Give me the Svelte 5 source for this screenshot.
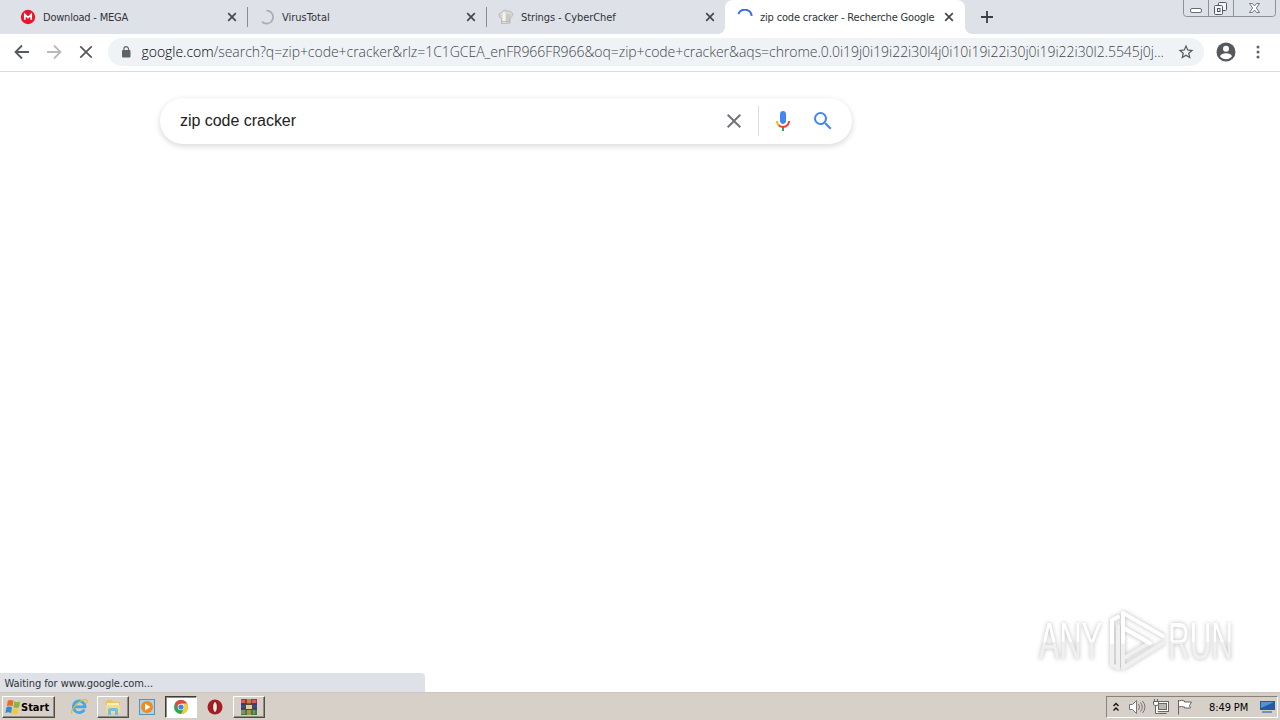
<script lang="ts">
	interface Tab {
		title: string;
		icon: 'mega' | 'loading' | 'chef' | 'spinner';
		active?: boolean;
		spacing: number;
	}

	const tabs: Tab[] = [
		{ title: 'Download - MEGA', icon: 'mega', spacing: -0.22 },
		{ title: 'VirusTotal', icon: 'loading', spacing: 0 },
		{ title: 'Strings - CyberChef', icon: 'chef', spacing: -0.1 },
		{ title: 'zip code cracker - Recherche Google', icon: 'spinner', active: true, spacing: -0.18 }
	];

	const host = 'google.com';
	const path =
		'/search?q=zip+code+cracker&rlz=1C1GCEA_enFR966FR966&oq=zip+code+cracker&aqs=chrome.0.0i19j0i19i22i30l4j0i10i19i22i30j0i19i22i30l2.5545j0j...';

	let query = $state('zip code cracker');
</script>

<div class="screen">
	<header class="tab-strip">
		{#each tabs as tab}
			<div class="tab" class:active={tab.active}>
				<svg class="favicon" viewBox="0 0 16 16">
					{#if tab.icon === 'mega'}
						<circle cx="8" cy="8" r="7.2" fill="#e5182b" />
						<path d="M4.8 10.8V5.5L8 8.5l3.2-3v5.3" fill="none" stroke="#fff" stroke-width="1.7" />
					{:else if tab.icon === 'loading'}
						<path d="M7.500 1.600A6.500 6.500 0 1 1 3 12.700" fill="none" stroke="#a9acb2" stroke-width="1.7" />
					{:else if tab.icon === 'chef'}
						<path d="M3.5 14.5V9.3C.2 8.4.3 3.6 3.6 3.4 5 .7 8.5.8 9.4 2.3c3.2-1 6 1.8 4.8 4.3-.3 1.4-1.3 2-2.2 2.4v5.1z" fill="#d8d7d4" stroke="#aaa9a6" stroke-width=".7" />
						<path d="M4.5 3.4h3v10h-3z" fill="#f3f2ef" />
						<path d="M9 5v7M11 5v7M4 12.5h8" stroke="#b7b5b0" stroke-width=".8" />
					{:else}
						<path d="M1.300 5A7 7 0 0 1 14.700 6.800" fill="none" stroke="#3c6be8" stroke-width="2" />
					{/if}
				</svg>
				<span class="tab-title" style="letter-spacing: {tab.spacing}px">{tab.title}</span>
				<svg class="tab-close" viewBox="0 0 10 10"><path d="M1.2 1.2l7.6 7.6M8.8 1.2L1.2 8.8" /></svg>
			</div>
		{/each}
		<svg class="new-tab" viewBox="0 0 14 14"><path d="M7 1v12M1 7h12" /></svg>
		<div class="window-buttons">
			<svg viewBox="0 0 94 17" fill="none">
				<path d="M.5 0v13.500q0 3 3 3h86q3 0 3-3V0M25.500 0v16M50.500 0v16" stroke="#8d929a" />
				<rect x="7.500" y="8.500" width="11" height="4" rx="1.500" fill="#fff" stroke="#676b72" />
				<rect x="35.500" y="2.500" width="8" height="8" rx="1" fill="#f5f6f8" stroke="#55595f" />
				<rect x="31.500" y="5.500" width="8" height="9" rx="1" fill="#f5f6f8" stroke="#55595f" />
				<rect x="34.500" y="8.500" width="2.500" height="3" stroke="#55595f" />
				<path d="M66.500 3.500h3l2 2.500 2-2.500h3l-3.200 4.500 3.200 4.500h-3l-2-2.500-2 2.500h-3l3.200-4.500z" fill="#fff" stroke="#676b72" stroke-width=".9" />
			</svg>
		</div>
	</header>

	<nav class="toolbar">
		<svg class="nav-icon" viewBox="0 0 16 16"><path d="M15 8H2M8 1.500L1.500 8 8 14.500" /></svg>
		<svg class="nav-icon disabled" viewBox="0 0 16 16"><path d="M1 8h13M8 1.500L14.500 8 8 14.500" /></svg>
		<svg class="nav-icon" viewBox="0 0 16 16"><path d="M2.300 2.300l11.400 11.400M13.700 2.300L2.300 13.700" /></svg>
		<div class="address-bar">
			<svg class="lock" viewBox="0 0 10 12">
				<rect x="1" y="4" width="8.500" height="7.500" rx="1" fill="#5f6368" />
				<path d="M2.900 5V3a2.300 2.300 0 0 1 4.600 0v2" fill="none" stroke="#5f6368" stroke-width="1.200" />
			</svg>
			<span class="url"><span class="host">{host}</span>{path}</span>
			<svg class="star" viewBox="0 0 24 24">
				<path d="M22 9.240l-7.190-.62L12 2 9.190 8.630 2 9.240l5.460 4.730L5.820 21 12 17.270 18.180 21l-1.630-7.030zM12 15.400l-3.760 2.270 1-4.280-3.320-2.880 4.380-.38L12 6.100l1.710 4.040 4.380.38-3.320 2.880 1 4.280z" />
			</svg>
		</div>
		<svg class="avatar" viewBox="0 0 20 20">
			<circle cx="10" cy="10" r="9.500" fill="#55585d" />
			<circle cx="10" cy="6.700" r="3" fill="#fff" />
			<path d="M4 14.200c1-4 11-4 12 0-2.800 3.900-9.200 3.900-12 0z" fill="#fff" />
		</svg>
		<svg class="menu" viewBox="0 0 4 14" fill="#5f6368">
			<circle cx="2" cy="2" r="1.500" /><circle cx="2" cy="7" r="1.500" /><circle cx="2" cy="12" r="1.500" />
		</svg>
	</nav>

	<main class="page">
		<div class="search-box">
			<input class="query" bind:value={query} aria-label="Search" />
			<svg class="clear" viewBox="0 0 24 24"><path d="M19 6.410L17.590 5 12 10.590 6.410 5 5 6.410 10.590 12 5 17.590 6.410 19 12 13.410 17.590 19 19 17.590 13.410 12z" /></svg>
			<span class="divider"></span>
			<svg class="mic" viewBox="0 0 24 24">
				<path fill="#4285f4" d="M12 15c1.660 0 3-1.310 3-2.970V4.970C15 3.310 13.660 2 12 2S9 3.310 9 4.970v7.060C9 13.690 10.340 15 12 15z" />
				<path fill="#34a853" d="M11 18.080h2V22h-2z" />
				<path fill="#fbbc05" d="M7.050 16.870c-1.270-1.330-2.050-2.830-2.050-4.870h2c0 1.450.56 2.420 1.470 3.380v.32l-1.150 1.180z" />
				<path fill="#ea4335" d="M12 16.930a4.970 5.250 0 0 1-3.540-1.550l-1.410 1.490c1.260 1.340 3.020 2.130 4.950 2.130 3.870 0 6.990-2.920 6.990-7h-1.990c0 2.920-2.240 4.930-5 4.930z" />
			</svg>
			<svg class="magnifier" viewBox="0 0 24 24">
				<path fill="#4285f4" d="M15.500 14h-.79l-.28-.27A6.471 6.471 0 0 0 16 9.500 6.500 6.500 0 1 0 9.500 16c1.610 0 3.090-.59 4.230-1.570l.27.28v.79l5 4.990L20.490 19zm-6 0C7.010 14 5 11.990 5 9.500S7.010 5 9.500 5 14 7.010 14 9.500 11.990 14 9.500 14z" />
			</svg>
		</div>
		<svg class="watermark" viewBox="0 0 220 80">
			<defs>
				<linearGradient id="lettering" gradientUnits="userSpaceOnUse" x1="0" y1="22" x2="0" y2="60">
					<stop offset=".52" stop-color="#fff" />
					<stop offset=".53" stop-color="#f0f0f0" />
				</linearGradient>
			</defs>
			<g class="mark">
				<text x="9" y="59" textLength="63" lengthAdjust="spacingAndGlyphs">ANY</text>
				<text x="138" y="59" textLength="65" lengthAdjust="spacingAndGlyphs">RUN</text>
				<path d="M88 17l-6 3v45l6 3V26M93 68l40-25M93 66V28l26 15-25 15" class="shade" />
				<path d="M82 42V20l6-3M93 42V13l40 23M94 28l26 15" />
			</g>
		</svg>
		<div class="status">Waiting for www.google.com...</div>
	</main>

	<footer class="taskbar">
		<button class="start">
			<svg viewBox="0 0 18 16">
				<path d="M4 1.500q3-2 6 0L9 7.500q-3-2-6 0z" fill="#ed6a25" />
				<path d="M11 2q3 2 6 0l-1 6q-3 2-6 0z" fill="#83b936" />
				<path d="M2.500 8.500q3-2 6 0l-1 6q-3-2-6 0z" fill="#338bd3" />
				<path d="M9.500 9q3 2 6 0l-1 6q-3 2-6 0z" fill="#f8c82f" />
			</svg>
			<span>Start</span>
		</button>
		<div class="task ie">
			<svg viewBox="0 0 18 18" fill="none">
				<path d="M14.300 11.600A5.800 5.800 0 1 1 15 8.800H5" stroke="#42a9e2" stroke-width="2.800" />
				<path d="M2 15.500C-.5 12 13-1.500 16.500 2c1 1 .4 2.500-.2 3.500" stroke="#e4ba3c" stroke-width="1.300" />
			</svg>
		</div>
		<div class="task raised">
			<svg viewBox="0 0 18 18">
				<path d="M2 4l1-2h5l1 2h7v11H2z" fill="#e7c566" />
				<path d="M3 5h12v4H3z" fill="#fbefb3" />
				<path d="M2 7h14v8H2z" fill="#f3dc8b" />
				<path d="M4 17v-5q0-2 2-2h6q2 0 2 2v5h-3v-4H7v4z" fill="#78bdde" />
			</svg>
		</div>
		<div class="task">
			<svg viewBox="0 0 18 18">
				<rect x="1.500" y="1.500" width="15" height="15" fill="#a9d4ed" stroke="#5793bb" />
				<circle cx="9" cy="9" r="6" fill="#f28b19" />
				<path d="M7 5.500v7l5.500-3.500z" fill="#fff" />
			</svg>
		</div>
		<div class="task pressed">
			<svg viewBox="0 0 18 18">
				<circle cx="9" cy="9" r="7" fill="#31a353" />
				<path d="M2.900 5.500A7 7 0 0 1 15.100 5.500H9L6 10.500z" fill="#df4937" />
				<path d="M15.100 5.500A7 7 0 0 1 9 16l3-5.500-3-5z" fill="#f8cb3c" />
				<circle cx="9" cy="9" r="3.300" fill="#fff" /><circle cx="9" cy="9" r="2.600" fill="#477fe3" />
			</svg>
		</div>
		<div class="task opera">
			<svg viewBox="0 0 18 18">
				<circle cx="9" cy="9" r="7.500" fill="#a91d20" />
				<ellipse cx="9" cy="9" rx="2.400" ry="5.500" fill="#f2e9e5" stroke="#721114" />
			</svg>
		</div>
		<div class="task raised winrar">
			<svg viewBox="0 0 18 18">
				<path d="M1 1h16v5H1z" fill="#b72e3b" /><path d="M1 6h16v5H1z" fill="#344ba0" /><path d="M1 11h16v6H1z" fill="#328347" />
				<path d="M7 1h4v16H7z" fill="#b88c42" />
				<path d="M1 6h16M1 11h16" stroke="#382d33" />
				<path d="M5.500 6.500h7v5h-7z" fill="#ddd1a0" stroke="#554633" />
				<path d="M2 2v3M4 2v3M13 2v3M15 2v3M2 12v4M4 12v4M14 12v4" stroke="#e8908c" />
			</svg>
		</div>
		<div class="tray">
			<svg class="chevrons" viewBox="0 0 8 10"><path d="M1.500 4L4 1.500 6.500 4M1.500 8.500L4 6l2.500 2.500" fill="none" stroke="#111" stroke-width="1.400" /></svg>
			<svg class="speaker" viewBox="0 0 18 16" fill="none" stroke="#777">
				<path d="M1.500 5.500h3L8.500 1.500v13l-4-4h-3z" fill="#fff" />
				<path d="M10.500 5q2 3 0 6M12.500 3.500q3.500 4.500 0 9M14.500 2q5 6 0 12" />
			</svg>
			<svg class="network" viewBox="0 0 18 16" fill="none" stroke="#666">
				<rect x="4.500" y="3.500" width="11" height="8" fill="#d4d1ca" stroke="#fff" stroke-width="3" />
				<rect x="3.500" y="2.500" width="13" height="10" />
				<rect x="6.500" y="4.500" width="8" height="6" fill="#bbb8b2" />
				<path d="M6.500 14.500h8M2.500 0v3M5.500 0v3M1.500 2.500h5v3l-1.500 1H3l-1.500-1zM3.500 7v7.500h3" fill="#fff" />
			</svg>
			<svg class="flag" viewBox="0 0 18 16" fill="#fff" stroke="#666"><path d="M2.500 1v14.500M2.500 2q3-1.500 6 0v1h7l-2 3.500 1 2.500h-6V8q-3-1-6 0z" /></svg>
			<span class="clock">8:49 PM</span>
			<svg class="desktop" viewBox="0 0 16 14">
				<path d="M1 1h15v9H1z" fill="#235aa4" /><path d="M2 2h13L2 8z" fill="#5692d4" />
				<path d="M3 11h10v2H3z" fill="#7392b6" />
			</svg>
		</div>
	</footer>
</div>

<style>
	:global(body) {
		overflow: hidden;
	}

	.screen {
		width: 1280px;
		height: 720px;
		display: flex;
		flex-direction: column;
		background: #fff;
		font-family: 'DejaVu Sans Condensed', 'DejaVu Sans', sans-serif;
		font-size: 11px;
	}

	svg {
		display: block;
		flex-shrink: 0;
	}

	.tab-strip {
		height: 34px;
		display: flex;
		align-items: center;
		background: #dee1e8;
		padding-left: 8px;
		flex-shrink: 0;
	}

	.tab {
		width: 239px;
		height: 34px;
		box-sizing: border-box;
		display: flex;
		align-items: center;
		padding: 0 10px 0 12px;
		position: relative;
		color: #303337;
	}

	.tab:nth-child(-n + 2)::after {
		content: '';
		position: absolute;
		right: -1px;
		top: 7px;
		width: 1px;
		height: 20px;
		background: #888c93;
	}

	.tab.active {
		width: 240px;
		padding-right: 11px;
		background: #fff;
		border-radius: 8px 8px 0 0;
	}

	.tab.active::before,
	.tab.active::after {
		content: '';
		position: absolute;
		bottom: 0;
		width: 8px;
		height: 8px;
	}

	.tab.active::before {
		left: -8px;
		background: radial-gradient(circle at 0 0, transparent 8px, #fff 8px);
	}

	.tab.active::after {
		right: -8px;
		background: radial-gradient(circle at 100% 0, transparent 8px, #fff 8px);
	}

	.favicon {
		width: 16px;
		height: 16px;
		margin-right: 7px;
	}

	.tab-title {
		flex: 1;
		white-space: nowrap;
	}

	.tab-close {
		width: 10px;
		height: 10px;
		fill: none;
		stroke: #45494e;
		stroke-width: 1.7;
	}

	.new-tab {
		width: 14px;
		height: 14px;
		margin-left: 15px;
		fill: none;
		stroke: #3c4043;
		stroke-width: 1.8;
	}

	.window-buttons {
		margin-left: auto;
		align-self: flex-start;
		padding-right: 3px;
	}

	.window-buttons svg {
		width: 94px;
		height: 17px;
	}

	.toolbar {
		height: 38px;
		box-sizing: border-box;
		display: flex;
		align-items: center;
		padding: 0 20px 1px 14px;
		border-bottom: 1px solid #dadce0;
		flex-shrink: 0;
	}

	.nav-icon {
		width: 16px;
		height: 16px;
		margin-right: 16px;
		fill: none;
		stroke: #55585d;
		stroke-width: 1.8;
	}

	.disabled {
		stroke: #b8babd;
	}

	.address-bar {
		width: 1096px;
		height: 28px;
		box-sizing: border-box;
		display: flex;
		align-items: center;
		padding: 0 10px 0 13px;
		margin-left: -2px;
		border-radius: 14px;
		background: #f0f3f6;
	}

	.lock {
		width: 10px;
		height: 12px;
		margin-right: 10px;
	}

	.url {
		width: 1036px;
		padding-left: 0.5px;
		padding-bottom: 1px;
		white-space: nowrap;
		font: 300 14px 'Open Sans', sans-serif;
		letter-spacing: -0.04px;
		color: #42464b;
	}

	.host {
		color: #000;
	}

	.star {
		width: 18px;
		height: 18px;
		margin: 0 -1px 0 auto;
		fill: #55585d;
	}

	.avatar {
		width: 20px;
		height: 20px;
		margin-left: 12px;
	}

	.menu {
		width: 4px;
		height: 14px;
		margin-left: auto;
	}

	.page {
		flex: 1;
		display: flex;
		flex-direction: column;
		padding-top: 26px;
		position: relative;
	}

	.search-box {
		width: 692px;
		height: 46px;
		box-sizing: border-box;
		display: flex;
		align-items: center;
		margin-left: 160px;
		padding: 0 17px 0 20px;
		border-radius: 24px;
		background: #fff;
		box-shadow: 0 2px 5px 1px rgba(64, 60, 67, 0.16);
	}

	.query {
		flex: 1;
		min-width: 0;
		padding: 0;
		border: 0;
		outline: 0;
		background: none;
		font: 16px 'Liberation Sans', sans-serif;
		letter-spacing: -0.03px;
		color: #222;
	}

	.clear {
		width: 24px;
		height: 24px;
		fill: #70757a;
	}

	.divider {
		width: 1px;
		height: 30px;
		margin: 0 12px;
		background: #dadce0;
	}

	.mic {
		width: 24px;
		height: 24px;
		margin-right: 16px;
	}

	.magnifier {
		width: 24px;
		height: 24px;
	}

	.watermark {
		position: absolute;
		left: 1030px;
		top: 528px;
		width: 220px;
		height: 80px;
		overflow: visible;
	}

	.mark {
		filter: drop-shadow(0 0 2px #bbb);
		font: 51px 'Liberation Sans Narrow', 'Liberation Sans', sans-serif;
		fill: url(#lettering);
	}

	.mark path {
		fill: none;
		stroke: #fff;
		stroke-width: 4;
		stroke-linejoin: round;
		stroke-linecap: round;
	}

	.mark .shade {
		stroke: #f0f0f0;
	}

	.status {
		width: 425px;
		height: 19px;
		box-sizing: border-box;
		margin-top: auto;
		margin-bottom: 1px;
		padding-left: 4.5px;
		border-radius: 0 4px 0 0;
		background: #dee1e8;
		color: #303337;
		line-height: 21px;
		letter-spacing: -0.07px;
	}

	.taskbar {
		height: 27px;
		box-sizing: border-box;
		display: flex;
		align-items: center;
		padding: 1px 2px 0 2px;
		background: #d6d0c8;
		flex-shrink: 0;
		box-shadow: 0 -1px #c8c7c0;
	}

	.start,
	.raised {
		border: 1px solid;
		border-color: #fff #514e49 #514e49 #fff;
		box-shadow: inset -1px -1px #918b82;
	}

	.start {
		width: 53px;
		height: 22px;
		box-sizing: border-box;
		display: flex;
		align-items: center;
		padding: 0 1px;
		margin-right: 8px;
		background: #d6d0c8;
		font: bold 11px 'DejaVu Sans Condensed', sans-serif;
		color: #000;
	}

	.start svg {
		width: 17px;
		height: 16px;
	}

	.task {
		width: 32px;
		height: 22px;
		box-sizing: border-box;
		display: flex;
		align-items: center;
		justify-content: center;
		margin-right: 2px;
	}

	.task svg {
		width: 18px;
		height: 18px;
	}

	.pressed {
		background: #fff;
		border: 1px solid;
		border-color: #3e3b38 #fff #fff #3e3b38;
		box-shadow: inset 1px 1px #918b82;
	}

	.tray {
		width: 172px;
		height: 22px;
		box-sizing: border-box;
		display: flex;
		align-items: center;
		margin-left: auto;
		padding-left: 5px;
		border: 1px solid;
		border-color: #88827a #fff #fff #88827a;
	}

	.chevrons {
		width: 8px;
		height: 10px;
	}

	.speaker,
	.network,
	.flag {
		width: 18px;
		height: 16px;
	}

	.speaker {
		margin-left: 8px;
	}

	.network {
		margin-left: 6px;
	}

	.flag {
		margin-left: 6px;
	}

	.clock {
		width: 42px;
		margin-left: 15px;
		white-space: nowrap;
		letter-spacing: -0.1px;
	}

	.desktop {
		width: 16px;
		height: 14px;
		margin-left: 8px;
	}
</style>
